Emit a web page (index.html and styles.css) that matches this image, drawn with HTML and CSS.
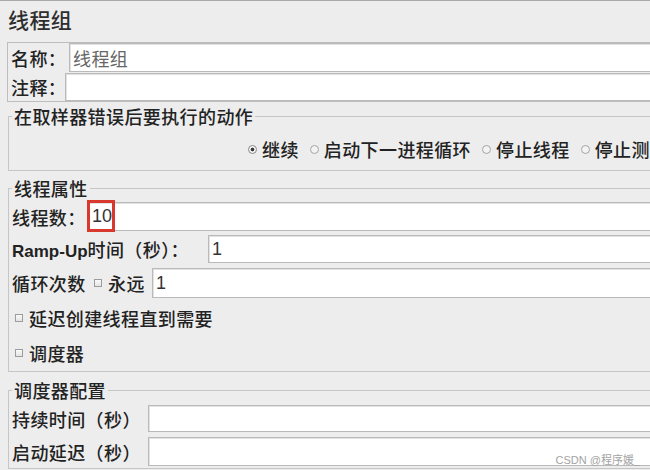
FILE: index.html
```html
<!DOCTYPE html>
<html lang="zh-CN">
<head>
  <meta charset="UTF-8" />
  <title>线程组</title>
  <meta name="viewport" content="width=device-width, initial-scale=1.0"/>
  <link rel="stylesheet" href="styles.css">
</head>
<body>

<div class="page">
  <h1 class="title">线程组</h1>

  <div class="name-box">
    <div class="row row-name">
      <label class="lbl lbl-name">名称：</label>
      <input class="field field-cn" type="text" value="线程组">
    </div>
    <div class="row row-comment">
      <label class="lbl lbl-comment">注释：</label>
      <input class="field" type="text">
    </div>
  </div>

  <fieldset class="group group-action">
    <legend>在取样器错误后要执行的动作</legend>
    <div class="radios">
      <label class="option"><span class="radio checked"></span>继续</label>
      <label class="option"><span class="radio"></span>启动下一进程循环</label>
      <label class="option"><span class="radio"></span>停止线程</label>
      <label class="option"><span class="radio"></span>停止测试</label>
    </div>
  </fieldset>

  <fieldset class="group group-threads">
    <legend>线程属性</legend>
    <div class="row row-threads">
      <label class="lbl lbl-threads">线程数：</label>
      <div class="field-wrap">
        <input class="field" type="text" value="10">
        <span class="mark"></span>
      </div>
    </div>
    <div class="row row-ramp">
      <label class="lbl lbl-ramp"><b class="latin">Ramp-Up</b>时间（秒）：</label>
      <input class="field" type="text" value="1">
    </div>
    <div class="row row-loop">
      <label class="lbl lbl-loop">循环次数</label>
      <span class="check"></span>
      <span class="lbl lbl-forever">永远</span>
      <input class="field" type="text" value="1">
    </div>
    <div class="row row-check">
      <span class="check"></span>
      <span class="lbl">延迟创建线程直到需要</span>
    </div>
    <div class="row row-check">
      <span class="check"></span>
      <span class="lbl">调度器</span>
    </div>
  </fieldset>

  <fieldset class="group group-schedule">
    <legend>调度器配置</legend>
    <div class="row row-duration">
      <label class="lbl lbl-sched">持续时间（秒）</label>
      <input class="field" type="text">
    </div>
    <div class="row row-delay">
      <label class="lbl lbl-sched">启动延迟（秒）</label>
      <input class="field" type="text">
    </div>
  </fieldset>
</div>

<div class="watermark">CSDN @程序媛_</div>

</body>
</html>
```

FILE: styles.css
```css
html {
  overflow: hidden;
}

body {
  margin: 0;
  background: #ededed;
  color: #222;
  font-family: "Noto Sans CJK SC", "Liberation Sans", sans-serif;
  font-size: 18px;
  font-weight: 500;
  letter-spacing: 0.4px;
}

.page {
  width: 700px;
  border-top: 1px solid #a9a9a9;
}

.title {
  margin: 0 0 5px;
  padding-left: 8px;
  height: 36px;
  line-height: 36px;
  font-size: 21px;
  font-weight: 500;
  color: #2e2e2e;
}

/* name / comment box */
.name-box {
  margin-left: 7px;
  border: 1px solid #bdbdbd;
  border-right: none;
  padding-left: 3px;
}

.row {
  display: flex;
  align-items: center;
  white-space: nowrap;
}

.lbl {
  flex: none;
}

.field {
  flex: 1;
  min-width: 0;
  height: 100%;
  box-sizing: border-box;
  margin: 0;
  padding: 0 3px;
  border: 1px solid #bababa;
  box-shadow: inset 1px 1px 0 #e2e2e2;
  background: #fff;
  font: 18px "Liberation Sans", "Noto Sans CJK SC", sans-serif;
  color: #333;
  outline: none;
}

.field-cn {
  font-family: "Noto Sans CJK SC", sans-serif;
  color: #666;
  letter-spacing: 0.4px;
}

.row-name { height: 29px; }
.row-comment { height: 28px; margin-top: 1px; }
.lbl-name { width: 58px; }
.lbl-comment { width: 54px; }

/* titled groups */
.group {
  margin: 0 0 0 8px;
  padding: 0 0 0 3px;
  border: 1px solid #c6c6c6;
  border-right: none;
  min-width: 0;
}

.group legend {
  padding: 0 2px;
  line-height: 22px;
}

.group-action { margin-top: 3px; padding-bottom: 9px; }
.group-threads { margin-top: 6px; padding-bottom: 3px; }
.group-schedule { margin-top: 7px; padding-bottom: 2px; }

.radios {
  display: flex;
  align-items: center;
  height: 24px;
  margin: 10px 0 0 236px;
  gap: 11px;
  white-space: nowrap;
}

.option {
  flex: none;
  display: flex;
  align-items: center;
}

.radio {
  width: 9px;
  height: 9px;
  box-sizing: border-box;
  border: 1px solid #a4a4a4;
  border-radius: 50%;
  background: #f3f3f3;
  margin-right: 5px;
}

.radio.checked {
  border-color: #8a8a8a;
  background: radial-gradient(circle, #3a3a3a 0 1.6px, #f3f3f3 2.2px);
}

.check {
  flex: none;
  width: 8px;
  height: 8px;
  box-sizing: border-box;
  border: 1px solid #9c9c9c;
  background: linear-gradient(#fafafa, #e4e4e4);
}

/* thread properties */
.row-threads { height: 29px; margin-top: 3px; }
.row-ramp { height: 28px; margin-top: 4px; }
.row-loop { height: 30px; margin-top: 5px; }
.row-check { height: 30px; margin-top: 5px; }

.lbl-threads { width: 76px; }
.lbl-ramp { width: 196px; }
.lbl-loop { width: 82px; }
.lbl-forever { width: 44px; margin-left: 6px; }

.latin {
  font-family: "Liberation Sans", sans-serif;
  font-size: 17px;
  font-weight: bold;
  letter-spacing: 0;
}

.row-check .check {
  margin: 0 6px 0 3px;
}

.field-wrap {
  position: relative;
  flex: 1;
  height: 100%;
  display: flex;
}

.mark {
  position: absolute;
  left: -1px;
  top: -2px;
  width: 28px;
  height: 32px;
  box-sizing: border-box;
  border: 3px solid #d9392c;
}

/* scheduler */
.row-duration { height: 27px; margin-top: 4px; }
.row-delay { height: 29px; margin-top: 5px; }
.lbl-sched { width: 136px; }

.watermark {
  position: absolute;
  right: 10px;
  top: 451px;
  font: 11px "Liberation Sans", "Noto Sans CJK SC", sans-serif;
  color: #a3a3a3;
  letter-spacing: 0;
}
```
